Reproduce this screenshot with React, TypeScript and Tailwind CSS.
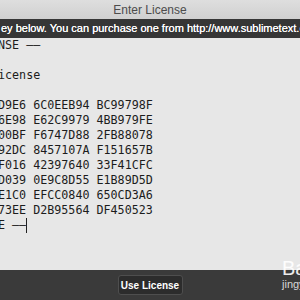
const lines = [
  'NSE ——',
  '',
  'icense',
  '',
  'D9E6 6C0EEB94 BC99798F',
  '6E98 E62C9979 4BB979FE',
  '00BF F6747D88 2FB88078',
  '92DC 8457107A F151657B',
  'F016 42397640 33F41CFC',
  'D039 0E9C8D55 E1B89D5D',
  'E1C0 EFCC0840 650CD3A6',
  '73EE D2B95564 DF450523',
];

export default function App() {
  return (
    <div className="relative w-[300px] h-[300px] overflow-hidden flex flex-col bg-[#e7e7e7]">
      {/* Title bar */}
      <div className="h-[19px] shrink-0 flex items-center justify-center bg-gradient-to-b from-[#dedede] to-[#d0d0d0] text-[#4c4c4c] text-[12px] font-['Liberation_Sans',sans-serif]">
        Enter License
      </div>

      {/* Message bar */}
      <div className="h-[19px] shrink-0 flex items-center bg-[#363636] text-white text-[11px] whitespace-nowrap overflow-hidden font-['Liberation_Sans',sans-serif]">
        <span className="ml-[1px] [text-shadow:0_0_0.4px_#fff]">ey below. You can purchase one from http://www.sublimetext.com</span>
      </div>

      {/* License text */}
      <div className="flex-1 bg-[#e7e7e7] text-[#1c1c1c] text-[11.7px] leading-[15px] whitespace-pre font-['DejaVu_Sans_Mono',monospace]">
        <div className="ml-[-2px]">
          {lines.map((l, i) => (
            <div key={i} className="h-[15px]">{l}</div>
          ))}
          <div className="h-[15px] flex items-center">
            <span>E —–</span>
            <span className="w-[1px] h-[15px] bg-[#222]" />
          </div>
        </div>
      </div>

      {/* Bottom bar */}
      <div className="h-[30px] shrink-0 bg-[#3a3a3a] flex items-center justify-center">
        <button className="w-[65px] h-[20px] rounded-[3px] bg-[#2c2c2c] border border-[#4e4e4e] text-white text-[10px] font-bold font-['Liberation_Sans',sans-serif]">
          Use License
        </button>
      </div>

      {/* Watermark */}
      <div className="absolute left-[282px] top-[258px] flex flex-col font-['Liberation_Sans',sans-serif] leading-none">
        <span className="text-[20px] text-white/90">Bai</span>
        <span className="text-[11px] text-[#d8d8d8] mt-[1px]">jingyan</span>
      </div>
    </div>
  );
}
